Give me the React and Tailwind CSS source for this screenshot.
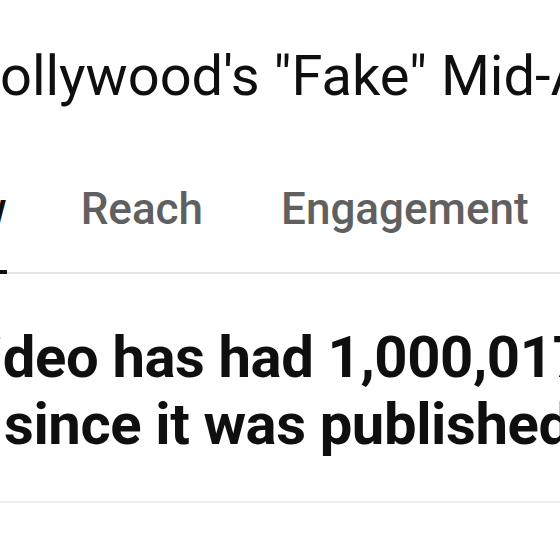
export default function App() {
  return (
    <div
      className="w-[560px] h-[560px] overflow-hidden bg-white text-[#0f0f0f]"
      style={{ fontFamily: 'Roboto, "Liberation Sans", sans-serif' }}
    >
      {/* Video title */}
      <div className="pt-[44px] whitespace-nowrap">
        <h1 className="ml-[-40px] text-[56px] leading-[64px] font-normal">
          Hollywood's "Fake" Mid-Atlantic Accent
        </h1>
      </div>

      {/* Analytics tabs */}
      <div className="mt-[74px] border-b-2 border-[#e5e5e5] whitespace-nowrap">
        <div className="flex ml-[-174px] text-[44px] leading-[54px] font-medium">
          <div className="flex flex-col pr-[37px]">
            <span className="text-[#0f0f0f]">Overview</span>
            <div className="mt-[34px] h-[4px] -mb-[2px] bg-[#0f0f0f]" />
          </div>
          <div className="pl-[37px] pr-[41px] text-[#606060]">Reach</div>
          <div className="px-[37px] text-[#606060]">Engagement</div>
          <div className="px-[37px] text-[#606060]">Audience</div>
        </div>
      </div>

      {/* Summary */}
      <div className="pt-[50px] pb-[43px] border-b-2 border-[#eeeeee] whitespace-nowrap text-[58px] leading-[67px] font-bold tracking-[-0.4px]">
        <p className="ml-[-174px]">Your video has had 1,000,017 views</p>
        <p className="ml-[4px]">since it was published</p>
      </div>
    </div>
  );
}
